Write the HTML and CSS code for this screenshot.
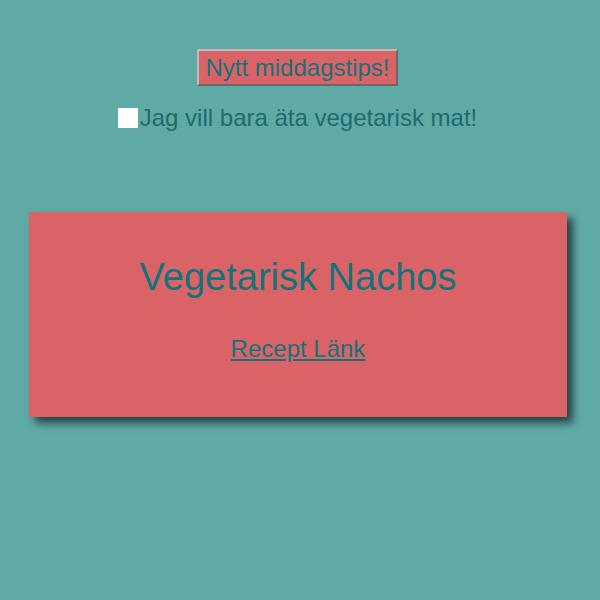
FILE: index.html
```html
<!DOCTYPE html>
<html lang="sv">
<head>
<meta charset="utf-8">
<link rel="stylesheet" href="styles.css">
</head>
<body>
<main class="page">
  <button class="tip-btn">Nytt middagstips!</button>
  <label class="veg-row"><span class="box"></span><span>Jag vill bara äta vegetarisk mat!</span></label>
  <section class="card">
    <h2 class="dish">Vegetarisk Nachos</h2>
    <a class="link" href="#">Recept Länk</a>
  </section>
</main>
</body>
</html>
```
FILE: styles.css
```css
html, body {
  margin: 0;
  padding: 0;
  background: #60aaa6;
  height: 100%;
}
.page {
  font-family: "Liberation Sans", Arial, sans-serif;
  display: flex;
  flex-direction: column;
  align-items: center;
  padding-top: 49px;
  padding-right: 5px;
}
.tip-btn {
  font-family: "Liberation Sans", Arial, sans-serif;
  font-size: 24px;
  line-height: 27px;
  color: #13737a;
  background: #d96366;
  border: 2px outset #bcbcbc;
  padding: 3px 6px 3px 6px;
  margin: 0;
}
.veg-row {
  display: flex;
  align-items: center;
  margin-top: 18px;
  font-size: 24px;
  line-height: 28px;
  color: #1c6c70;
}
.box {
  width: 20px;
  height: 20px;
  background: #fff;
  margin-right: 2px;
}
.card {
  align-self: flex-start;
  margin-left: 29px;
  margin-top: 80px;
  width: 538px;
  box-sizing: border-box;
  height: 205px;
  background: #d96366;
  box-shadow: 6px 6px 8px rgba(0, 0, 0, 0.6);
  display: flex;
  flex-direction: column;
  align-items: center;
  padding-top: 43px;
}
.dish {
  margin: 0;
  font-weight: normal;
  font-size: 38px;
  line-height: 44px;
  color: #13737a;
}
.link {
  margin-top: 36px;
  font-size: 24px;
  line-height: 28px;
  color: #13737a;
  text-decoration: underline;
}
```
